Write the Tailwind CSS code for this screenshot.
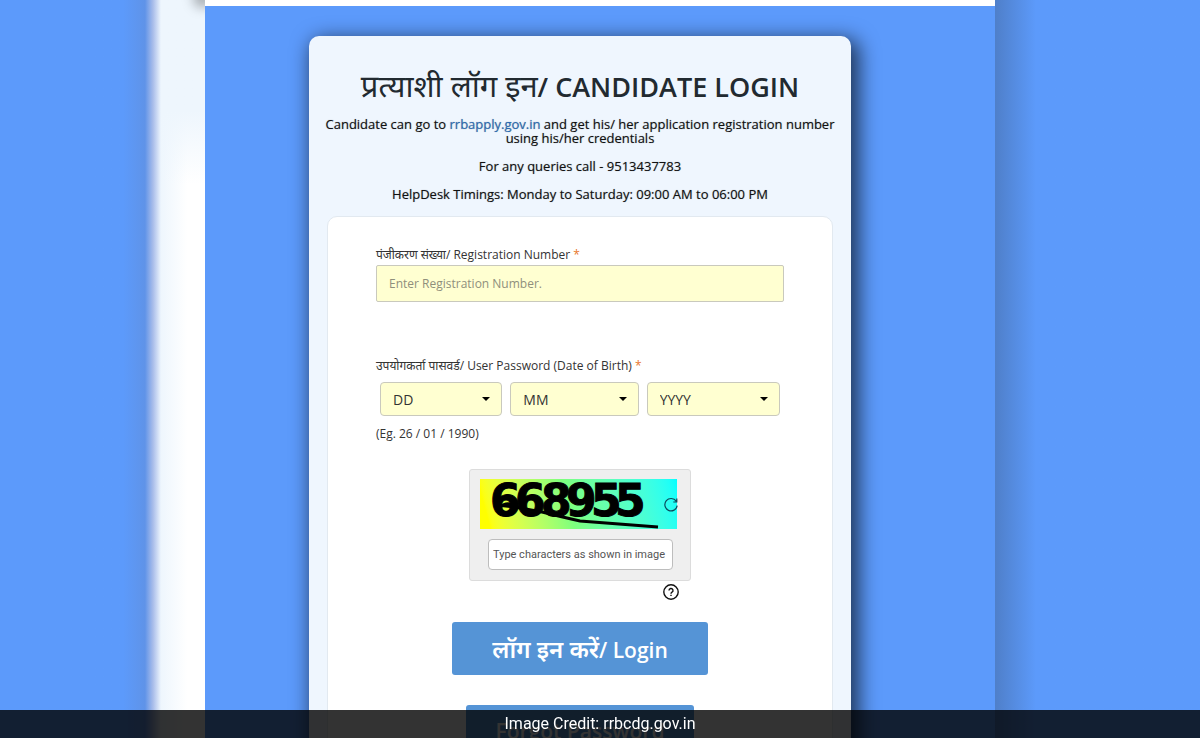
<!DOCTYPE html>
<html lang="hi">
<head>
  <meta charset="UTF-8">
  <meta name="viewport" content="width=device-width, initial-scale=1">
  <title>Candidate Login</title>
  <script src="https://cdn.jsdelivr.net/npm/@tailwindcss/browser@4"></script>
</head>
<body class="h-screen overflow-hidden bg-[#5c9afb] font-['Open_Sans','Noto_Sans_Devanagari','Noto_Sans',sans-serif] text-[#222]">
  <div class="grid h-full grid-cols-[205fr_790fr_205fr]">

    <!-- blurred side -->
    <div class="relative flex overflow-hidden">
      <div class="flex-1 bg-linear-to-r from-[#5c9afb] from-85% to-[#5f93e8]"></div>
      <div class="w-4 bg-linear-to-r from-[#5f93e8] via-[#a9bdea] to-[#eef6fd]"></div>
      <div class="w-11 bg-linear-to-b from-[#eef6fd] from-15% to-transparent to-25%"></div>
      <div class="absolute inset-y-0 right-0 -z-10 w-11 bg-linear-to-r from-[#eef6fd] to-white to-60%"></div>
      <div class="absolute -top-3 -right-2 size-5 rounded-full bg-black/30 blur-[6px]"></div>
    </div>

    <main class="overflow-hidden border-t-6 border-white bg-[#5c9afb] pt-[30px] pr-36 pl-26">
      <section class="rounded-t-[10px] bg-[#eff6fe] px-[18px] pt-[31px] shadow-[5px_6px_20px_3px_rgba(0,0,0,0.65)]">
        <h1 class="text-center text-[27px] leading-9 font-semibold whitespace-nowrap text-[#222a30]"><span class="text-[31px] font-normal">प्रत्याशी लॉग इन</span>/ CANDIDATE LOGIN</h1>
        <div class="-mx-1 space-y-[14px] pt-3 text-center text-[13px] leading-[14px] text-[#111] [text-shadow:0_0_1px_#0006]">
          <p>Candidate can go to <a href="https://rrbapply.gov.in" class="text-[#2a6cb5]">rrbapply.gov.in</a> and get his/ her application registration number using his/her credentials</p>
          <p>For any queries call - 9513437783</p>
          <p>HelpDesk Timings: Monday to Saturday: 09:00 AM to 06:00 PM</p>
        </div>

        <form class="mt-[15px] h-[600px] rounded-t-[10px] border border-[#e2e9f0] bg-white px-12 pt-7">
          <label for="reg" class="block text-[12px] leading-5 text-[#333]">पंजीकरण संख्या/ Registration Number <span class="text-[#e8762c]">*</span></label>
          <input id="reg" type="text" placeholder="Enter Registration Number." class="h-[37px] w-full rounded-[2px] border border-[#c9c9bd] bg-[#ffffd1] px-3 text-[12px] placeholder:text-[#8f8f7c]">

          <label for="day" class="mt-[54px] block text-[12px] leading-5 text-[#333]">उपयोगकर्ता पासवर्ड/ User Password (Date of Birth) <span class="text-[#e8762c]">*</span></label>
          <div class="mt-[6px] grid grid-cols-[122fr_128fr_133fr] gap-2 px-1 text-[14px] text-[#333]">
            <div class="relative">
              <select id="day" aria-label="DD" class="h-[34px] w-full appearance-none rounded-[4px] border border-[#c9c9bd] bg-[#ffffd1] px-3">
                <option>DD</option>
              </select>
              <svg class="pointer-events-none absolute top-[15px] right-3 h-1 w-2" viewBox="0 0 8 4"><path d="M0 0h8L4 4z"/></svg>
            </div>
            <div class="relative">
              <select aria-label="MM" class="h-[34px] w-full appearance-none rounded-[4px] border border-[#c9c9bd] bg-[#ffffd1] px-3">
                <option>MM</option>
              </select>
              <svg class="pointer-events-none absolute top-[15px] right-3 h-1 w-2" viewBox="0 0 8 4"><path d="M0 0h8L4 4z"/></svg>
            </div>
            <div class="relative">
              <select aria-label="YYYY" class="h-[34px] w-full appearance-none rounded-[4px] border border-[#c9c9bd] bg-[#ffffd1] px-3">
                <option>YYYY</option>
              </select>
              <svg class="pointer-events-none absolute top-[15px] right-3 h-1 w-2" viewBox="0 0 8 4"><path d="M0 0h8L4 4z"/></svg>
            </div>
          </div>
          <p class="mt-2 text-[12px] leading-5 text-[#333]">(Eg. 26 / 01 / 1990)</p>

          <!-- captcha -->
          <div class="mx-auto mt-[25px] w-[222px] rounded-[3px] border border-[#dcdcdc] bg-[#efefef] px-[10px] pt-[9px] pb-[10px]">
            <div class="relative h-[50px] w-[197px] bg-linear-75 from-[#ffff00] from-5% via-[#7dff7d] via-45% to-[#00ffff]">
              <svg class="h-full w-full" viewBox="0 0 197 50" role="img" aria-label="Captcha">
                <text x="10 35 61 86 111 135" y="37" font-family="DejaVu Sans" font-weight="bold" font-size="44" stroke="#000">668955</text>
                <path d="M20 28q7-6 15-1M17 26l18 2 27 5q20 5 38 9l78 6" fill="none" stroke="#000" stroke-width="3"/>
              </svg>
              <button type="button" aria-label="Refresh captcha" class="absolute top-[18px] -right-[2px] size-4">
                <svg viewBox="0 0 16 16" fill="none" stroke="#0b4a5c" stroke-width="1.2"><path d="M13.200 4.200A6.200 6.200 0 1 0 14.200 8.600M13.800 1.500v3.500h-3.500"/></svg>
              </button>
            </div>
            <input type="text" aria-label="Captcha" placeholder="Type characters as shown in image" class="mt-[10px] ml-2 block h-[31px] w-[185px] rounded-[4px] border border-[#bdbdbd] bg-white px-1 font-['Roboto'] text-[11px] placeholder:text-[#555]">
          </div>
          <div class="mx-auto flex w-[222px] justify-end pt-[3px] pr-3">
            <button type="button" aria-label="Help" class="size-4">
              <svg viewBox="0 0 16 16" fill="none" stroke="#111" stroke-width="1.4"><circle cx="8" cy="8" r="7.200"/><path d="M6 6.500a2 2 0 1 1 3 1.700c-.7.4-1 .8-1 1.500M8 10.800v1.300"/></svg>
            </button>
          </div>

          <div class="flex flex-col items-center gap-[30px] pt-[22px] font-semibold text-white">
            <button type="submit" class="h-[53px] w-64 rounded-[3px] bg-[#5594d6] text-[21px]"><span class="text-[24px]">लॉग इन करें</span>/ Login</button>
            <button type="button" class="h-[53px] w-[228px] rounded-[3px] bg-[#5594d6] text-[21px]">Forgot Password</button>
          </div>
        </form>
      </section>
    </main>

    <!-- blurred side -->
    <div class="bg-linear-to-r from-[#4f7fc9] to-[#5c9afb] to-20%"></div>
  </div>

  <footer class="fixed inset-x-0 bottom-0 h-7 bg-black/80 text-center font-['Roboto'] text-[16px] leading-7 text-white">Image Credit: rrbcdg.gov.in</footer>
</body>
</html>
